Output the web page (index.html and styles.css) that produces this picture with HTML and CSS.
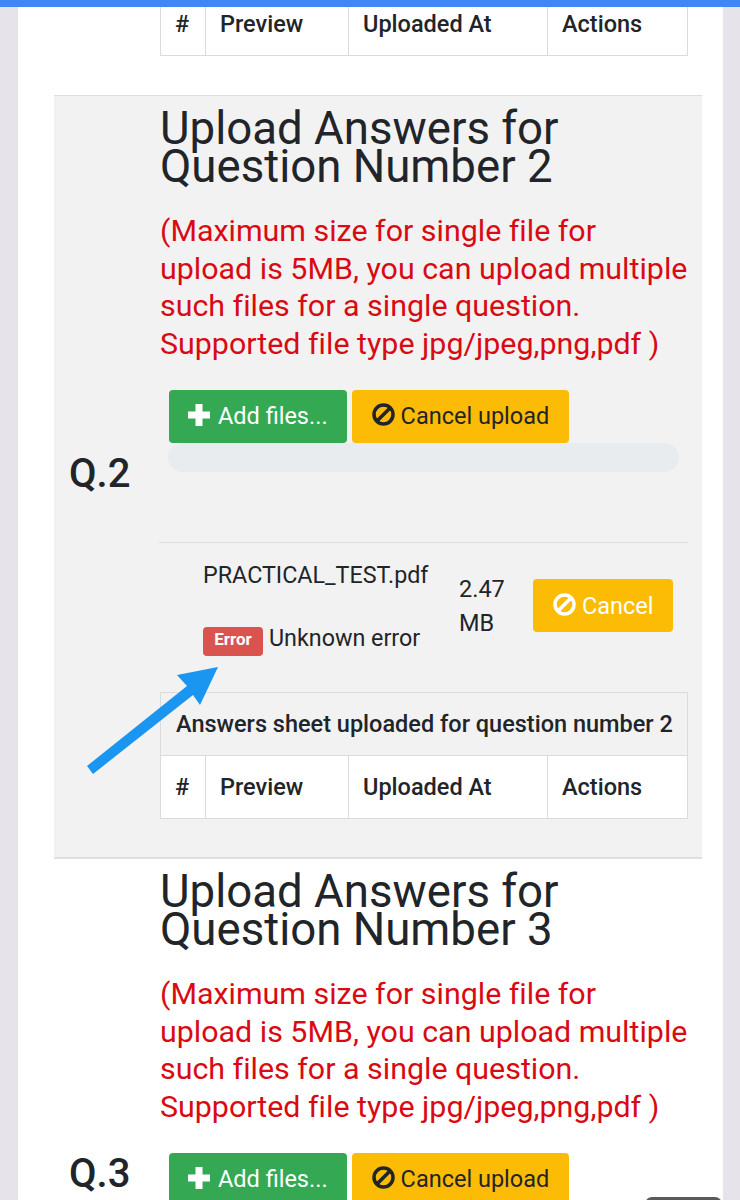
FILE: index.html
```html
<!DOCTYPE html>
<html lang="en">
<head>
<meta charset="utf-8">
<title>Upload Answers</title>
<link rel="stylesheet" href="styles.css">
</head>
<body>
<div class="topbar"></div>
<main class="card">
  <div class="top-table">
    <table class="answers">
      <colgroup><col class="c1"><col class="c2"><col class="c3"><col class="c4"></colgroup>
      <tr><th>#</th><th>Preview</th><th>Uploaded At</th><th>Actions</th></tr>
    </table>
  </div>

  <section class="row row-alt">
    <div class="qno">Q.2</div>
    <div class="content">
      <h2>Upload Answers for Question Number 2</h2>
      <p class="note">(Maximum size for single file for upload is 5MB, you can upload multiple such files for a single question. Supported file type jpg/jpeg,png,pdf )</p>
      <div class="actions">
        <button class="btn btn-green"><svg class="ico" viewBox="0 0 22 22"><path d="M7.5 0h7v7.5H22v7h-7.500V22h-7v-7.500H0v-7h7.500z" fill="currentColor"/></svg>Add files...</button>
        <button class="btn btn-yellow"><svg class="ico ico-ban" viewBox="0 0 23 23"><circle cx="11.500" cy="11.500" r="9.500" fill="none" stroke="currentColor" stroke-width="3.500"/><path d="M5 18 18 5" stroke="currentColor" stroke-width="3.500"/></svg>Cancel upload</button>
      </div>
      <div class="progress"></div>
      <hr class="sep">
      <div class="file">
        <div class="file-info">
          <div class="file-name">PRACTICAL_TEST.pdf</div>
          <div class="file-error"><span class="badge">Error</span><span>Unknown error</span></div>
        </div>
        <div class="file-size">2.47 MB</div>
        <button class="btn btn-yellow btn-light"><svg class="ico ico-ban" viewBox="0 0 23 23"><circle cx="11.500" cy="11.500" r="9.500" fill="none" stroke="currentColor" stroke-width="3.500"/><path d="M5 18 18 5" stroke="currentColor" stroke-width="3.500"/></svg>Cancel</button>
      </div>
      <table class="answers">
        <colgroup><col class="c1"><col class="c2"><col class="c3"><col class="c4"></colgroup>
        <tr><th colspan="4" class="cap">Answers sheet uploaded for question number 2</th></tr>
        <tr class="white"><th>#</th><th>Preview</th><th>Uploaded At</th><th>Actions</th></tr>
      </table>
    </div>
    <svg class="arrow" viewBox="0 0 140 115"><polygon points="132,0 91,8 101,19 1,99 7,107 107,28 114,38" fill="#1a96f0"/></svg>
  </section>

  <section class="row">
    <div class="qno">Q.3</div>
    <div class="content">
      <h2>Upload Answers for Question Number 3</h2>
      <p class="note">(Maximum size for single file for upload is 5MB, you can upload multiple such files for a single question. Supported file type jpg/jpeg,png,pdf )</p>
      <div class="actions">
        <button class="btn btn-green"><svg class="ico" viewBox="0 0 22 22"><path d="M7.5 0h7v7.5H22v7h-7.500V22h-7v-7.500H0v-7h7.500z" fill="currentColor"/></svg>Add files...</button>
        <button class="btn btn-yellow"><svg class="ico ico-ban" viewBox="0 0 23 23"><circle cx="11.500" cy="11.500" r="9.500" fill="none" stroke="currentColor" stroke-width="3.500"/><path d="M5 18 18 5" stroke="currentColor" stroke-width="3.500"/></svg>Cancel upload</button>
      </div>
      <div class="progress"></div>
      <hr class="sep sep-empty">
      <table class="answers">
        <colgroup><col class="c1"><col class="c2"><col class="c3"><col class="c4"></colgroup>
        <tr><th colspan="4" class="cap">Answers sheet uploaded for question number 3</th></tr>
        <tr><th>#</th><th>Preview</th><th>Uploaded At</th><th>Actions</th></tr>
      </table>
    </div>
  </section>
</main>
<div class="handle"></div>
</body>
</html>
```
FILE: styles.css
```css
* { box-sizing: border-box; }
html, body { margin: 0; height: 1200px; overflow: hidden; }
body {
  background: #e6e4ea;
  font-family: Roboto, "Liberation Sans", sans-serif;
  font-size: 23.5px;
  line-height: 36px;
  color: #212529;
}
.topbar {
  position: fixed;
  top: 0; left: 0; right: 0;
  height: 7px;
  background: #4285f4;
  z-index: 2;
}
.handle {
  position: fixed;
  left: 645px; top: 1197px;
  width: 77px; height: 12px;
  background: #5a5a5a;
  border-radius: 7px 7px 0 0;
}
.card {
  width: 705px;
  margin-left: 18px;
  padding: 0 21px 0 36px;
  background: #fff;
}
.top-table {
  margin-top: -8px;
  padding: 0 15px 39px 106px;
}
.top-table th { height: 62px; }
.row {
  position: relative;
  display: flex;
  align-items: center;
  width: 648px;
  padding-right: 15px;
  border-top: 1px solid #dedede;
}
.row-alt {
  background: #f2f2f2;
  border-bottom: 1px solid #dedede;
}
.qno {
  flex: 0 0 106px;
  padding: 0 0 4px 15px;
  font-size: 40px;
  line-height: 48px;
  font-weight: 500;
}
.content { flex: 0 0 527px; padding: 14px 0 38px; }
h2 {
  margin: 0 0 26px;
  font-size: 45.6px;
  line-height: 38px;
  font-weight: 400;
}
.note {
  margin: 0 -4px 27px 0;
  font-size: 30.4px;
  line-height: 37.7px;
  color: #d90a12;
  font-variant-ligatures: none;
}
.actions {
  display: flex;
  gap: 5px;
  padding-left: 9px;
}
.btn {
  display: inline-flex;
  align-items: center;
  height: 53px;
  border: 0;
  border-radius: 4px;
  font: inherit;
}
.btn-green { background: #34a853; color: #fff; gap: 8px; padding: 0 19px; }
.btn-yellow { background: #fcbc06; color: #212529; gap: 6px; padding: 0 20px; }
.btn-light { color: #fff; flex: 0 0 auto; padding: 0 19px 0 20px; }
.ico { width: 22px; height: 22px; flex: 0 0 auto; margin-bottom: 3px; }
.ico-ban { width: 23px; height: 23px; }
.progress {
  width: 511px;
  height: 29px;
  margin-left: 8px;
  border-radius: 14.5px;
  background: #e9ecef;
}
.sep {
  width: 529px;
  height: 1px;
  margin: 70px 0 0 -1px;
  border: 0;
  background: #dedede;
}
.sep-empty { margin-bottom: 23px; }
.file {
  display: flex;
  align-items: center;
  height: 126px;
  margin-bottom: 23px;
  padding-left: 43px;
}
.file-info { flex: 0 0 256px; align-self: flex-start; padding-top: 14px; }
.file-name { margin-bottom: 27px; font-size: 23.3px; }
.file-error { display: flex; align-items: flex-end; gap: 6px; font-size: 23.3px; }
.badge {
  display: block;
  width: 60px;
  height: 29px;
  border-radius: 4px;
  background: #d9534f;
  color: #fff;
  font-size: 17px;
  line-height: 25px;
  font-weight: 700;
  text-align: center;
}
.file-size { flex: 0 0 74px; line-height: 34px; }
.answers {
  width: 527px;
  border-collapse: collapse;
  table-layout: fixed;
}
.answers th {
  height: 63px;
  padding: 0 14px;
  border: 1px solid #d9dbdd;
  background: #fff;
  font-weight: 500;
  text-align: left;
  white-space: nowrap;
}
.answers .cap { padding: 0 15px; }
.row-alt .answers .cap { background: #f2f2f2; }
.c1 { width: 45px; }
.c2 { width: 143px; }
.c3 { width: 199px; }
.c4 { width: 140px; }
.arrow {
  position: absolute;
  left: 32px; top: 571px;
  width: 140px; height: 115px;
}
```
